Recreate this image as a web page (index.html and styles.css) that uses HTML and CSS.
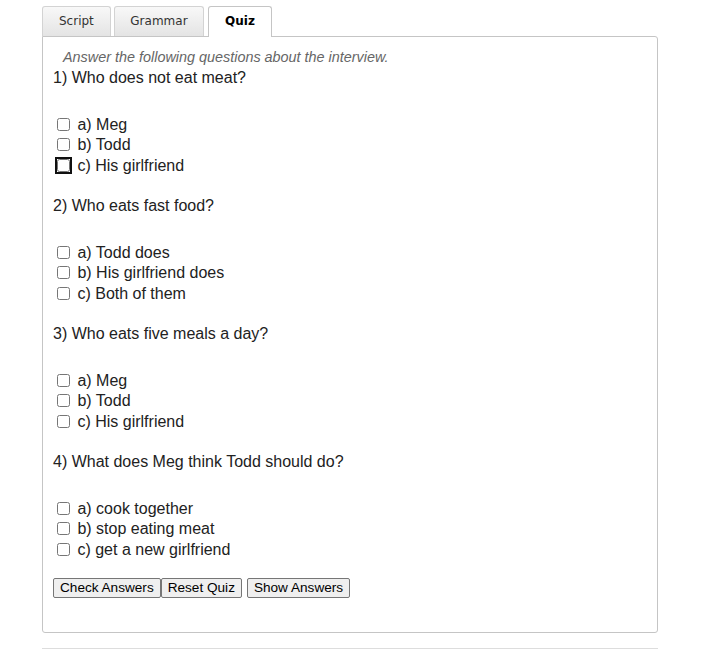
FILE: index.html
```html
<!DOCTYPE html>
<html>
<head>
<meta charset="utf-8">
<link rel="stylesheet" href="styles.css">
</head>
<body>
<div class="wrap">
  <ul class="tabs">
    <li class="tab">Script</li>
    <li class="tab mid">Grammar</li>
    <li class="tab active">Quiz</li>
  </ul>
  <div class="panel">
    <p class="intro">Answer the following questions about the interview.</p>
    <div class="q">
      <p class="qt">1) Who does not eat meat?</p>
      <label class="opt"><input type="checkbox"> a) Meg</label>
      <label class="opt"><input type="checkbox"> b) Todd</label>
      <label class="opt"><input type="checkbox" class="focus"> c) His girlfriend</label>
    </div>
    <div class="q">
      <p class="qt">2) Who eats fast food?</p>
      <label class="opt"><input type="checkbox"> a) Todd does</label>
      <label class="opt"><input type="checkbox"> b) His girlfriend does</label>
      <label class="opt"><input type="checkbox"> c) Both of them</label>
    </div>
    <div class="q">
      <p class="qt">3) Who eats five meals a day?</p>
      <label class="opt"><input type="checkbox"> a) Meg</label>
      <label class="opt"><input type="checkbox"> b) Todd</label>
      <label class="opt"><input type="checkbox"> c) His girlfriend</label>
    </div>
    <div class="q">
      <p class="qt">4) What does Meg think Todd should do?</p>
      <label class="opt"><input type="checkbox"> a) cook together</label>
      <label class="opt"><input type="checkbox"> b) stop eating meat</label>
      <label class="opt"><input type="checkbox"> c) get a new girlfriend</label>
    </div>
    <div class="buttons">
      <button class="btn">Check Answers</button><button class="btn">Reset Quiz</button><button class="btn gap">Show Answers</button>
    </div>
  </div>
  <div class="rule"></div>
</div>
</body>
</html>
```
FILE: styles.css
```css
html, body {
  margin: 0;
  padding: 0;
  background: #fff;
}
body {
  font-family: "Liberation Sans", Arial, sans-serif;
  color: #222;
}
.wrap {
  width: 616px;
  margin-left: 42px;
  padding-top: 6px;
}
.tabs {
  list-style: none;
  margin: 0;
  padding: 0;
  display: flex;
  align-items: flex-end;
  gap: 3px;
  position: relative;
  z-index: 1;
}
.tab {
  font-family: "DejaVu Sans", Verdana, sans-serif;
  font-size: 12px;
  color: #333;
  height: 29px;
  line-height: 29px;
  padding: 0 16px;
  border: 1px solid #d3d3d3;
  border-bottom: none;
  border-radius: 3px 3px 0 0;
  background: linear-gradient(#f8f8f8, #e4e4e4);
}
.tab.mid {
  padding: 0 15.5px;
}
.tab.active {
  background: #fff;
  color: #000;
  font-weight: bold;
  height: 30px;
  margin-bottom: -1px;
  margin-left: 1px;
  border-color: #c5c5c5;
}
.panel {
  box-sizing: border-box;
  height: 597px;
  border: 1px solid #c5c5c5;
  border-radius: 0 3px 3px 3px;
  padding: 11px 10px 0 10px;
}
.intro {
  margin: 0 0 0 10px;
  font-style: italic;
  font-size: 14.4px;
  color: #666;
  line-height: 18px;
}
.q {
  margin: 0 0 20px 0;
}
.qt {
  margin: 2px 0 27px 0;
  font-size: 16px;
  line-height: 20px;
}
.q + .q .qt {
  margin-top: 0;
}
.opt {
  display: block;
  font-size: 16px;
  line-height: 20px;
  height: 20.333px;
}
.opt input {
  margin: 3px 3px 3px 4px;
  vertical-align: -1px;
}
.opt input.focus {
  outline: 2px solid #101010;
  outline-offset: 0;
  border-radius: 2px;
}
.buttons {
  display: flex;
  align-items: flex-start;
  margin-top: -2px;
}
.btn {
  font-family: "Liberation Sans", Arial, sans-serif;
  font-size: 13.6px;
  color: #000;
  background: #efefef;
  border: 1px solid #767676;
  border-radius: 2px;
  padding: 1px 6px;
  margin: 0;
  height: 20px;
}
.btn.gap {
  margin-left: 5px;
}
.rule {
  margin-top: 15px;
  border-top: 1px solid #ddd;
}
```
